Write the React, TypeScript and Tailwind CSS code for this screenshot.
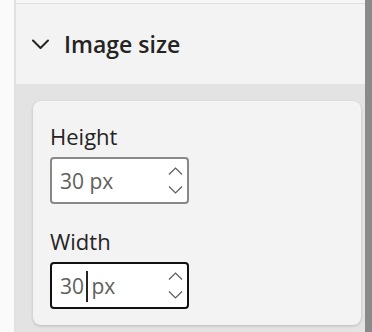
import { useState } from 'react';

function Chevron({ className }: { className?: string }) {
    return (
        <svg className={className} viewBox="0 0 17 10" fill="none" stroke="currentColor">
            <path d="M1 1.5l7.5 7.5 7.5-7.5" strokeWidth={2} strokeLinecap="round" strokeLinejoin="round" />
        </svg>
    );
}

function Spinner() {
    return (
        <div className="flex flex-col items-center justify-between h-[27px] text-[#5c5c5c]">
            <svg className="w-[15px] h-[8px]" viewBox="0 0 15 8" fill="none" stroke="currentColor">
                <path d="M1 7.5l6.5-6.5 6.5 6.5" strokeWidth={1.2} />
            </svg>
            <svg className="w-[15px] h-[8px]" viewBox="0 0 15 8" fill="none" stroke="currentColor">
                <path d="M1 0.5l6.5 6.5 6.5-6.5" strokeWidth={1.2} />
            </svg>
        </div>
    );
}

function NumberField({ label, value, focused }: { label: string; value: string; focused?: boolean }) {
    return (
        <div>
            <p className="text-[22px] leading-[28px] text-[#252423]">{label}</p>
            <div
                className={
                    'mt-[7px] w-[139px] h-[47px] rounded-[4px] bg-white flex items-center pl-[8px] pr-[4px] ' +
                    (focused ? 'border-2 border-[#111111]' : 'border-2 border-[#8a8886]')
                }
            >
                <span className="flex-1 text-[21px] leading-none text-[#605e5c] flex items-center pt-[2px]">
                    {focused ? (
                        <>
                            <span>30</span>
                            <span className="inline-block w-[1.5px] h-[31px] bg-[#252423] ml-[2px] mr-[4px]" />
                            <span>px</span>
                        </>
                    ) : (
                        <span>{value}</span>
                    )}
                </span>
                <Spinner />
            </div>
        </div>
    );
}

export default function App() {
    const [open] = useState(true);

    return (
        <div className="w-[372px] h-[332px] flex bg-[#fafafa] overflow-hidden" style={{ fontFamily: '"Open Sans", "Noto Sans", sans-serif' }}>
            <div className="w-[14px] shrink-0" />
            <div className="flex-1 flex flex-col border-l-2 border-[#e1e1e1]">
                <div className="h-[3px] bg-[#f6f6f6]" />
                <div className="h-[1px] bg-[#dedede]" />
                {/* Section header */}
                <div className="h-[80px] bg-[#f3f3f3] flex items-center gap-[15px] pl-[16px]">
                    <Chevron className={'w-[17px] h-[10px] text-[#252423] ' + (open ? '' : '-rotate-90')} />
                    <span className="text-[23px] font-semibold text-[#252423] leading-none">Image size</span>
                </div>
                {/* Section body */}
                <div className="flex-1 bg-[#e3e3e3] pt-[17px] pl-[17px] pr-[4px]">
                    <div className="h-[224px] rounded-[8px] bg-[#f3f3f3] shadow-[0_1px_3px_rgba(0,0,0,0.18)] pt-[21px] pl-[17px] flex flex-col gap-[23px]">
                        <NumberField label="Height" value="30 px" />
                        <NumberField label="Width" value="30 px" focused />
                    </div>
                </div>
            </div>
            <div className="w-[7px] shrink-0 bg-[#8a8a8a]" />
        </div>
    );
}
